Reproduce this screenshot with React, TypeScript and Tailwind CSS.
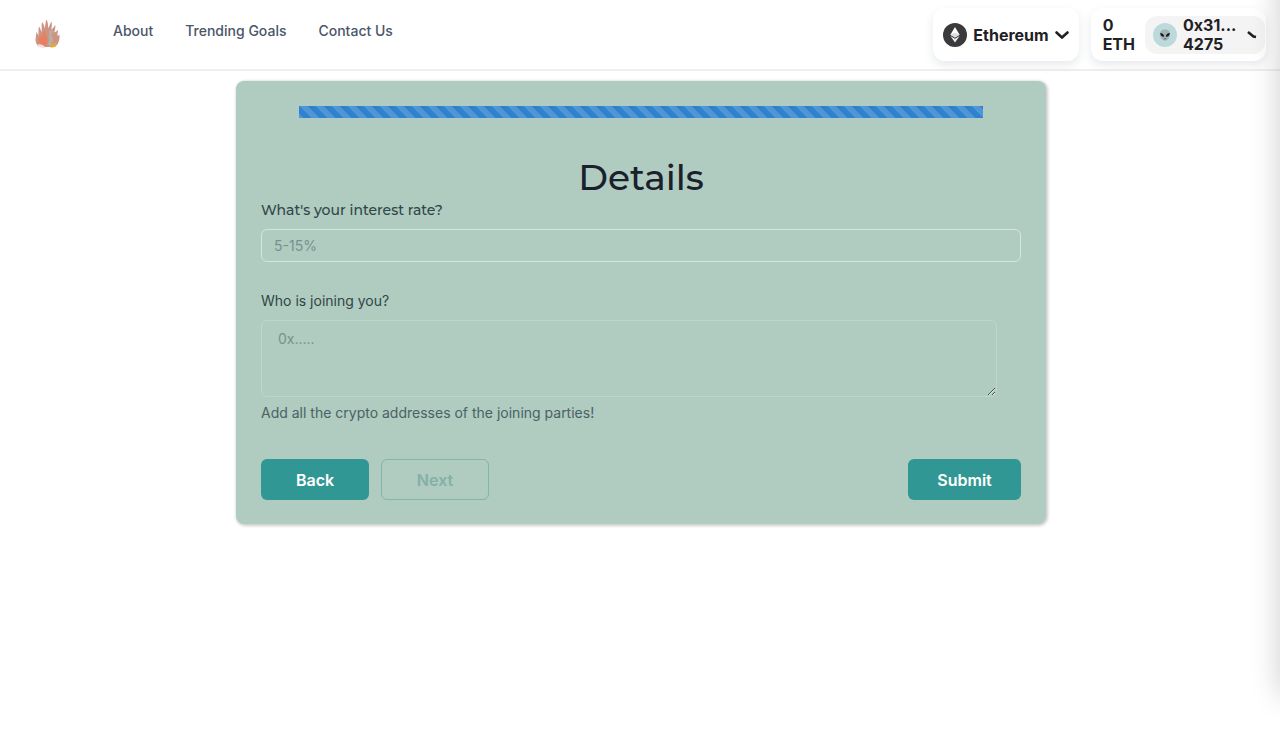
import { useState } from 'react';

const navLinks = ['About', 'Trending Goals', 'Contact Us'];

function FlameLogo() {
  return (
    <svg viewBox="0 0 25 30" className="h-[30px] w-[25px]" aria-hidden="true">
      <path
        d="M4 28C.5 25 .2 21 .8 18c.2-2 .6-3 .4-5 1.200 1 1.800 2 2.200 4C3.800 14 3 11 4 7.500c1.400 2 2 3.500 2.200 6C7.500 10 6 6.500 7 3c1.800 2 2.300 4 2.400 6.500C10.600 6.500 10.200 3.500 11.600.3c1.200 3 1.600 5.500 1.600 9 1.400-2 1.600-4.500 3.400-6.800.6 3 0 5.500-.2 8 1.400-1 2.400-2.500 4-4.500.2 3-.6 5-1 7.500 1.200-.6 2-1.500 3.600-2.500-.2 2.500-.6 4-.4 6 .8-.4 1-.8 1.800-1.500.6 4-.2 9-4.400 12.500z"
        fill="#cd9484"
      />
      <path d="M6 27c-3-4-2.500-8-.5-11 .8 1.500 1 2 1.800 3 .2-3 .7-5 2.200-7 .8 3 2.200 4 2.700 7 .6 4-.2 6-2.200 8z" fill="#e8805f" />
      <path d="M14 12c2-1.500 3.500-1.200 4.500.6-.6 1.800-2 2-2.200 4 1.400 1.500 2 3.500 1.400 6L14.500 28 13 24.500c1.600-2.500 1.600-4.500.6-6.500.8-2 .8-4 .4-6z" fill="#b5b0a6" />
      <path d="M2 26c2-1.500 5.500-1 8.500 2.500-3 1-6.500.5-8.500-2.500z" fill="#f1e3dc" />
      <path d="M15 28c0-3 3-4.500 6.500-3.500C21 27.500 18 29.500 15 28z" fill="#e5a83a" />
    </svg>
  );
}

function EthIcon() {
  return (
    <svg viewBox="0 0 24 24" className="size-6 shrink-0" aria-hidden="true">
      <circle cx="12" cy="12" r="12" fill="#3a3a3c" />
      <path d="M12 4 7.400 11.800 12 14.600l4.600-2.800z" fill="#fff" />
      <path d="m7.400 13 4.600 6.500 4.600-6.500-4.600 2.700z" fill="#eee" />
      <path d="m12 9.800-4.600 2L12 14.600l4.600-2.800z" fill="#ddd" />
    </svg>
  );
}

function AlienAvatar() {
  return (
    <svg viewBox="0 0 24 24" className="size-6 shrink-0" aria-hidden="true">
      <circle cx="12" cy="12" r="12" fill="#bcdadc" />
      <path d="M12 6.500c3.400 0 5.200 2 5.200 4.800 0 3.200-2.700 6.500-5.200 6.500s-5.200-3.300-5.200-6.500c0-2.800 1.800-4.800 5.200-4.800z" fill="#a3b3b5" />
      <path d="M7.200 10c2.200 0 3.800 1.200 4 3.600-2.300.3-3.900-1-4-3.600zM16.800 10c-2.200 0-3.800 1.200-4 3.600 2.300.3 3.900-1 4-3.600z" fill="#17191b" />
      <path d="M10.800 15.800h2.400" stroke="#4b5557" strokeWidth=".8" />
    </svg>
  );
}

function Header() {
  return (
    <header className="flex items-start justify-between border-b-2 border-[#efefef] pr-[14px] pb-2 pl-[35px]">
      <div className="flex items-start">
        <a href="#" aria-label="Home" className="pt-[19px]">
          <FlameLogo />
        </a>
        <nav className="flex gap-8 pt-5 pl-[53px] text-sm leading-[22px] font-medium text-[#4a5568]">
          {navLinks.map((link) => (
            <a key={link} href="#">
              {link}
            </a>
          ))}
        </nav>
      </div>
      <div className="flex gap-3 pt-2 text-base font-bold text-[#1f2124]">
        <button className="flex h-[53px] items-center gap-[6px] rounded-xl bg-white px-[10px] shadow-[0_4px_10px_rgba(48,71,105,0.12)]">
          <EthIcon />
          Ethereum
          <svg viewBox="0 0 14 8" className="h-2 w-[14px]" aria-hidden="true">
            <path d="m1.500 1.500 5.500 5 5.500-5" fill="none" stroke="#1f2124" strokeWidth="2.600" strokeLinecap="round" />
          </svg>
        </button>
        <div className="flex h-[53px] items-center gap-[10px] rounded-xl bg-white pr-px pl-3 text-left leading-[19px] shadow-[0_4px_10px_rgba(48,71,105,0.12)]">
          <span>
            0<br />
            ETH
          </span>
          <button className="flex items-center rounded-xl bg-[#f4f4f4] px-2 text-left">
            <AlienAvatar />
            <span className="w-[70px] pl-[6px]">
              0x31...
              <br />
              4275
            </span>
            <svg viewBox="0 0 10 8" className="h-2 w-[10px]" aria-hidden="true">
              <path d="m1 1 5.500 4.500L9 6" fill="none" stroke="#1f2124" strokeWidth="2.600" />
            </svg>
          </button>
        </div>
      </div>
    </header>
  );
}

export default function App() {
  const [rate, setRate] = useState('');
  const [parties, setParties] = useState('');

  return (
    <div className="min-h-screen bg-white font-['Inter',sans-serif]">
      <Header />
      <main className="pt-[10px] pr-4 pl-[18px]">
        <form
          className="mx-auto max-w-[810px] rounded-lg bg-[#b0cbbf] px-[25px] pt-[25px] pb-6 shadow-[1px_1px_3px_1px_rgba(0,0,0,0.2)]"
          onSubmit={(e) => e.preventDefault()}
        >
          <div
            role="progressbar"
            aria-label="Form progress"
            aria-valuenow={100}
            className="mx-[5%] h-3 bg-[#3182ce] bg-[linear-gradient(45deg,rgba(255,255,255,0.15)_25%,transparent_25%,transparent_50%,rgba(255,255,255,0.15)_50%,rgba(255,255,255,0.15)_75%,transparent_75%,transparent)] bg-[length:16px_16px]"
          />
          <h2 className="mt-[37px] text-center font-['Montserrat','Inter',sans-serif] text-4xl leading-[45px] font-medium text-[#1a202c]">
            Details
          </h2>

          <label htmlFor="rate" className="block font-['Montserrat','Inter',sans-serif] text-sm leading-5 font-medium text-[#2f4548]">
            What's your interest rate?
          </label>
          <input
            id="rate"
            value={rate}
            onChange={(e) => setRate(e.target.value)}
            placeholder="5-15%"
            className="mt-[9px] block h-[33px] w-full rounded-md border border-[#d5e6de] px-3 text-sm text-[#1a202c] outline-none placeholder:text-[#75928f]"
          />

          <label htmlFor="parties" className="mt-[29px] block text-sm leading-5 text-[#2f4548]">
            Who is joining you?
          </label>
          <div className="mt-[9px] pr-6">
            <textarea
              id="parties"
              rows={3}
              value={parties}
              onChange={(e) => setParties(e.target.value)}
              placeholder="0x....."
              className="block h-[77px] w-full resize-y rounded-md border border-[#bcd6cf] px-4 py-2 text-sm text-[#1a202c] outline-none placeholder:text-[#75928f]"
            />
          </div>
          <p className="mt-[6px] text-sm leading-5 text-[#4a6265]">Add all the crypto addresses of the joining parties!</p>

          <div className="mt-9 flex justify-between text-base font-semibold">
            <div className="flex gap-3">
              <button type="button" className="h-[41px] w-[108px] rounded-md bg-[#319795] text-white">
                Back
              </button>
              <button type="button" disabled className="h-[41px] w-[108px] rounded-md border border-[#83b5a9] text-[#83b0a8]">
                Next
              </button>
            </div>
            <button type="submit" className="h-[41px] w-[113px] rounded-md bg-[#319795] text-white">
              Submit
            </button>
          </div>
        </form>
      </main>
      <div className="pointer-events-none fixed top-[-40px] bottom-9 left-full w-10 shadow-[0_0_30px_rgba(0,0,0,0.2)]" />
    </div>
  );
}
